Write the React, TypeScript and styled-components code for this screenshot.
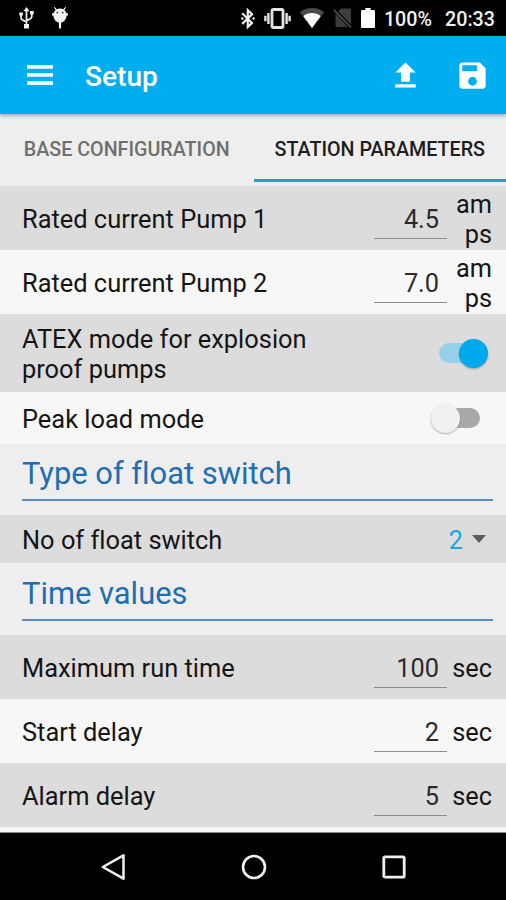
import React, { useState } from "react";
import styled, { createGlobalStyle } from "styled-components";

const GlobalStyle = createGlobalStyle`
  * { box-sizing: border-box; }
  body {
    margin: 0;
    background: #000;
    font-family: Roboto, "Liberation Sans", sans-serif;
    font-variant-ligatures: none;
    color: #151515;
  }
  button { border: 0; padding: 0; background: none; font: inherit; color: inherit; }
  svg { display: block; flex: none; }
`;

const Screen = styled.div`
  width: 506px;
  height: 900px;
  display: flex;
  flex-direction: column;
  overflow: hidden;
`;

const StatusBar = styled.header`
  height: 36px;
  flex: none;
  display: flex;
  justify-content: space-between;
  padding: 0 11px 0 19px;
  background: #000;
  color: #f1f1f1;
`;

const StatusGroup = styled.div<{ $gap: number }>`
  display: flex;
  align-items: center;
  gap: ${(p) => p.$gap}px;
`;

const StatusText = styled.span<{ $width: number }>`
  width: ${(p) => p.$width}px;
  white-space: nowrap;
  text-align: right;
  font-size: 19.7px;
  font-weight: 500;
  line-height: 24px;
  padding-top: 3px;
`;

const Toolbar = styled.div`
  position: relative;
  z-index: 1;
  height: 78px;
  flex: none;
  display: flex;
  align-items: center;
  padding: 0 16px 0 27px;
  background: #00aeef;
  color: #fff;
  box-shadow: 0 1px 4px rgba(0, 0, 0, 0.4);
`;

const Title = styled.h1`
  flex: 1;
  margin: 3px 0 0 32px;
  font-size: 28.1px;
  line-height: 34px;
  font-weight: 500;
`;

const Actions = styled.div`
  display: flex;
  gap: 32px;
`;

const Tabs = styled.nav`
  height: 72px;
  flex: none;
  display: grid;
  grid-template-columns: 253.5px 1fr;
  background: #eeeeee;
`;

const Tab = styled.button<{ $active: boolean }>`
  height: 68px;
  padding-top: 5px;
  text-align: center;
  white-space: nowrap;
  font-size: 19.7px;
  font-weight: 500;
  color: ${(p) => (p.$active ? "#1d1d1d" : "#6f6f6f")};
  border-bottom: 3px solid ${(p) => (p.$active ? "#1a9fe0" : "transparent")};
`;

const List = styled.main`
  height: 647px;
  flex: none;
  overflow: hidden;
  background: #eeeeee;
  border-bottom: 1px solid #8a8a8a;
`;

const Row = styled.div<{ $height: number; $shade: "dark" | "light" }>`
  height: ${(p) => p.$height}px;
  display: flex;
  align-items: center;
  padding: 0 14px 0 22px;
  background: ${(p) => (p.$shade === "dark" ? "#dcdcdc" : "#f7f7f7")};
`;

const Label = styled.div`
  flex: 1;
  padding-top: 4px;
  max-width: 300px;
  margin-right: auto;
  font-size: 25.4px;
  line-height: 29.6px;
`;

const Field = styled.input`
  width: 73px;
  height: 40px;
  margin: 1px 4px 0 0;
  padding: 2px 8px 0 0;
  border: 0;
  border-bottom: 1.5px solid #8c8c8c;
  border-radius: 0;
  outline: 0;
  background: transparent;
  text-align: right;
  font: 400 25.3px Roboto, "Liberation Sans", sans-serif;
  color: #2b2b2b;
`;

const Unit = styled.div`
  width: 41px;
  padding-top: 4px;
  text-align: right;
  word-break: break-all;
  font-size: 25.3px;
  line-height: 29.6px;
`;

const Section = styled.div<{ $height: number }>`
  height: ${(p) => p.$height}px;
  padding: 0 13px 0 22px;
`;

const SectionTitle = styled.h2<{ $height: number }>`
  height: ${(p) => p.$height}px;
  margin: 0;
  display: flex;
  align-items: flex-end;
  padding-bottom: 6px;
  border-bottom: 2px solid #4f8fc6;
  font-size: 30.9px;
  line-height: 38px;
  font-weight: 400;
  color: #1f6db3;
`;

const Switch = styled.button<{ $on: boolean }>`
  width: 49px;
  height: 29px;
  display: flex;
  align-items: center;
  flex-direction: ${(p) => (p.$on ? "row" : "row-reverse")};
  justify-content: flex-end;
  margin: 0 ${(p) => (p.$on ? 4 : 12)}px 0 0;
`;

const Track = styled.span<{ $on: boolean }>`
  width: 40px;
  height: 20px;
  flex: none;
  margin: ${(p) => (p.$on ? "0 -20px 0 0" : "0 0 0 -20px")};
  border-radius: 10px;
  background: ${(p) => (p.$on ? "#97d0e9" : "#a9a9a9")};
`;

const Knob = styled.span<{ $on: boolean }>`
  position: relative;
  width: 29px;
  height: 29px;
  flex: none;
  border-radius: 50%;
  background: ${(p) => (p.$on ? "#00a9ec" : "#f0f0f0")};
  box-shadow: 0 1px 2px rgba(0, 0, 0, 0.3);
`;

const Select = styled.button`
  display: flex;
  align-items: center;
  gap: 9px;
  margin-right: 6px;
  padding-top: 4px;
  font-size: 25.3px;
  line-height: 29.6px;
  color: #1ba5e4;

  svg {
    margin-bottom: 4px;
  }
`;

const NavBar = styled.footer`
  flex: 1;
  display: flex;
  align-items: center;
  justify-content: center;
  gap: 115px;
  background: #000;
`;

const UsbIcon = () => (
  <svg width="15" height="22" viewBox="0 0 15 22" fill="none" stroke="#f1f1f1" strokeWidth="1.7">
    <path d="M7.5 3v16M2 7.5v3.2c0 1.2.6 1.7 1.6 2.2l3.9 2.2M12.8 6v3.5c0 1.2-.6 1.7-1.6 2.2l-3.7 2" />
    <path d="M7.5 0l3 4.2h-6zM5 17h5v4.5H5zM.3 5.5h3.6v3H.3zM11 4h3.7v3.6H11z" fill="#f1f1f1" stroke="none" />
  </svg>
);

const BugIcon = () => (
  <svg width="16" height="22" viewBox="0 0 16 22">
    <path
      d="M2.800 0l1.900 2.300C5.700 1.700 6.800 1.500 8 1.500s2.300.2 3.300.8L13.200 0l.9.6-1.700 2.500c1 .8 1.700 1.900 2 3.100H16v2.400h-1.400c-.2 3.700-2.500 6.400-5.500 7.200v4.900c0 1.200-2.200 1.200-2.200 0v-4.900c-3-.8-5.300-3.500-5.500-7.200H0V6.200h1.600c.3-1.200 1-2.300 2-3.100L1.900.6z"
      fill="#f1f1f1"
    />
    <circle cx="5.300" cy="5.600" r=".9" fill="#333" />
    <circle cx="10.700" cy="5.600" r=".9" fill="#333" />
  </svg>
);

const BluetoothIcon = () => (
  <svg width="14" height="21" viewBox="0 0 14 21" fill="none" stroke="#f1f1f1" strokeWidth="2.200">
    <path d="M1.200 5.200l9.800 9.700-4.200 4V2.200l4.200 4-9.800 9.700" />
    <circle cx="1.300" cy="10.500" r="1.200" fill="#f1f1f1" stroke="none" />
    <circle cx="12.600" cy="10.500" r="1.200" fill="#f1f1f1" stroke="none" />
  </svg>
);

const VibrateIcon = () => (
  <svg width="27" height="21" viewBox="0 0 27 21" fill="none" stroke="#e4e4e4" strokeWidth="2.400">
    <rect x="8" y="1.500" width="11" height="18" rx="1.200" strokeWidth="2.800" />
    <path d="M4.400 5v11M1.400 7.800v5.400M22.600 5v11M25.600 7.800v5.400" />
  </svg>
);

const WifiIcon = () => (
  <svg width="24" height="20" viewBox="0 0 24 20">
    <path d="M12 20L0 4.200C3 1.600 7.200 0 12 0s9 1.600 12 4.200z" fill="#4a4a4a" />
    <path d="M12 20L3.300 8.200C5.700 6.200 8.600 5 12 5s6.300 1.200 8.700 3.200z" fill="#fff" />
  </svg>
);

const NoSimIcon = () => (
  <svg width="19" height="20" viewBox="0 0 19 20">
    <path d="M8 .5h8.500a1.500 1.500 0 0 1 1.500 1.500v14.500L5 3.500zM2.500 5.500L15 19H4a1.500 1.500 0 0 1-1.500-1.500z" fill="#3c3c3c" />
    <path d="M.6 1.800L18 19.300" stroke="#565656" strokeWidth="1.600" />
  </svg>
);

const BatteryIcon = () => (
  <svg width="14" height="20" viewBox="0 0 14 20">
    <path d="M4.300 0h5.400v2H12.800a1.200 1.200 0 0 1 1.200 1.200v15.600a1.200 1.200 0 0 1-1.200 1.200H1.200a1.200 1.200 0 0 1-1.200-1.200V3.200A1.200 1.200 0 0 1 1.200 2H4.300z" fill="#fff" />
  </svg>
);

const MenuIcon = () => (
  <svg width="26" height="20" viewBox="0 0 26 20" fill="#eefaff">
    <path d="M0 0h26v3.700H0zM0 8h26v3.700H0zM0 16.200h26v3.700H0z" />
  </svg>
);

const UploadIcon = () => (
  <svg width="35" height="35" viewBox="0 0 24 24" fill="#fff">
    <path d="M5 20.300h14v-2.300H5zM5 10h4v6.300h6V10h4l-7-7z" />
  </svg>
);

const SaveIcon = () => (
  <svg width="35" height="35" viewBox="0 0 24 24" fill="#fff">
    <path d="M17 3H5c-1.110 0-2 .9-2 2v14c0 1.100.89 2 2 2h14c1.100 0 2-.9 2-2V7l-4-4zm-5 16c-1.660 0-3-1.340-3-3s1.340-3 3-3 3 1.340 3 3-1.340 3-3 3zm3-10H5V5h10v4z" />
  </svg>
);

const CaretIcon = () => (
  <svg width="14" height="8" viewBox="0 0 14 8">
    <path d="M0 0h14L7 8z" fill="#5e5e5e" />
  </svg>
);

const BackIcon = () => (
  <svg width="26" height="28" viewBox="0 0 26 28" fill="none" stroke="#f0f0f0" strokeWidth="2.500" strokeLinejoin="round">
    <path d="M2.800 14L23.500 2.300v23.400z" />
  </svg>
);

const HomeIcon = () => (
  <svg width="26" height="26" viewBox="0 0 26 26" fill="none" stroke="#f0f0f0" strokeWidth="2.600">
    <circle cx="13" cy="13" r="11" />
  </svg>
);

const RecentsIcon = () => (
  <svg width="24" height="24" viewBox="0 0 24 24" fill="none" stroke="#f0f0f0" strokeWidth="2.800">
    <rect x="1.800" y="1.800" width="20.400" height="20.400" rx="1.200" />
  </svg>
);

type Shade = "dark" | "light";

function ValueRow(props: { label: string; value: string; unit: string; shade: Shade }) {
  return (
    <Row $height={64} $shade={props.shade}>
      <Label>{props.label}</Label>
      <Field defaultValue={props.value} aria-label={props.label} />
      <Unit>{props.unit}</Unit>
    </Row>
  );
}

function ToggleRow(props: { label: string; initial: boolean; height: number; shade: Shade }) {
  const [on, setOn] = useState(props.initial);
  return (
    <Row $height={props.height} $shade={props.shade}>
      <Label>{props.label}</Label>
      <Switch $on={on} onClick={() => setOn(!on)} role="switch" aria-checked={on}>
        <Track $on={on} />
        <Knob $on={on} />
      </Switch>
    </Row>
  );
}

export default function App() {
  const [tab, setTab] = useState(1);
  return (
    <Screen>
      <GlobalStyle />
      <StatusBar>
        <StatusGroup $gap={18}>
          <UsbIcon />
          <BugIcon />
        </StatusGroup>
        <StatusGroup $gap={9}>
          <BluetoothIcon />
          <VibrateIcon />
          <WifiIcon />
          <NoSimIcon />
          <StatusGroup $gap={8}>
            <BatteryIcon />
            <StatusText $width={49}>100%</StatusText>
            <StatusText $width={55}>20:33</StatusText>
          </StatusGroup>
        </StatusGroup>
      </StatusBar>
      <Toolbar>
        <MenuIcon />
        <Title>Setup</Title>
        <Actions>
          <UploadIcon />
          <SaveIcon />
        </Actions>
      </Toolbar>
      <Tabs>
        {["BASE CONFIGURATION", "STATION PARAMETERS"].map((name, i) => (
          <Tab key={name} $active={tab === i} onClick={() => setTab(i)}>
            {name}
          </Tab>
        ))}
      </Tabs>
      <List>
        <ValueRow label="Rated current Pump 1" value="4.5" unit="amps" shade="dark" />
        <ValueRow label="Rated current Pump 2" value="7.0" unit="amps" shade="light" />
        <ToggleRow label="ATEX mode for explosion proof pumps" initial height={78} shade="dark" />
        <ToggleRow label="Peak load mode" initial={false} height={52} shade="light" />
        <Section $height={71}>
          <SectionTitle $height={57}>Type of float switch</SectionTitle>
        </Section>
        <Row $height={48} $shade="dark">
          <Label>No of float switch</Label>
          <Select>
            2
            <CaretIcon />
          </Select>
        </Row>
        <Section $height={72}>
          <SectionTitle $height={58}>Time values</SectionTitle>
        </Section>
        <ValueRow label="Maximum run time" value="100" unit="sec" shade="dark" />
        <ValueRow label="Start delay" value="2" unit="sec" shade="light" />
        <ValueRow label="Alarm delay" value="5" unit="sec" shade="dark" />
        <Row $height={64} $shade="light" />
      </List>
      <NavBar>
        <BackIcon />
        <HomeIcon />
        <RecentsIcon />
      </NavBar>
    </Screen>
  );
}
